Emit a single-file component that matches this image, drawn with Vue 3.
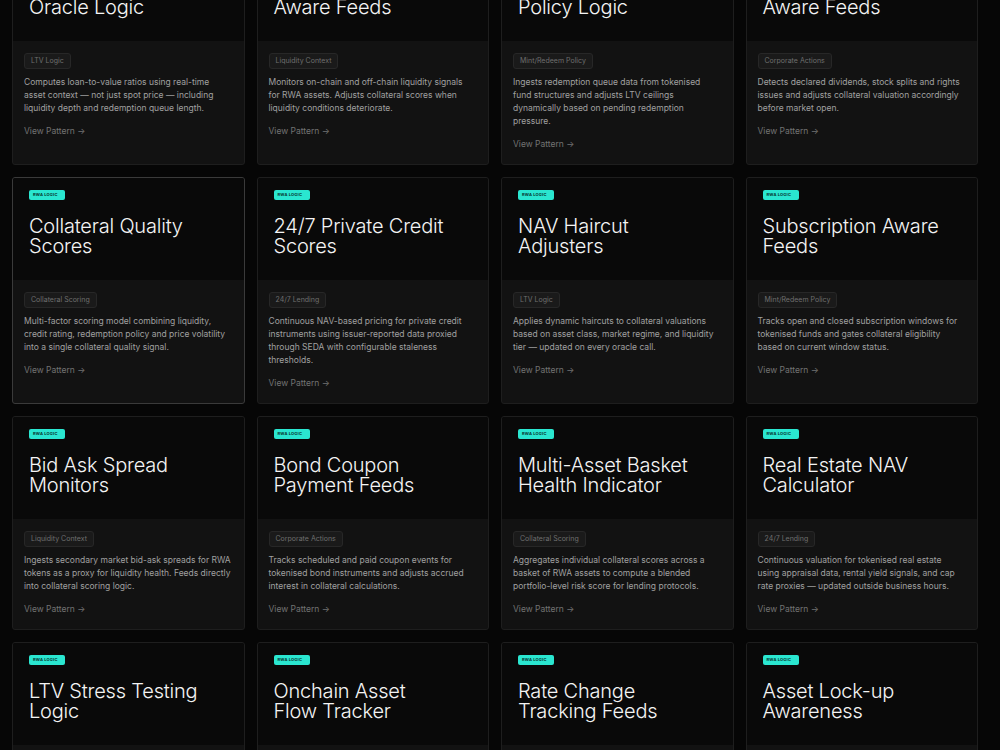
<script setup>
const patterns = [
  { title: 'Loan-to-Value\nOracle Logic', tag: 'LTV Logic', text: 'Computes loan-to-value ratios using real-time asset context — not just spot price — including liquidity depth and redemption queue length.' },
  { title: 'Liquidity\nAware Feeds', tag: 'Liquidity Context', text: 'Monitors on-chain and off-chain liquidity signals for RWA assets. Adjusts collateral scores when liquidity conditions deteriorate.' },
  { title: 'Redemption\nPolicy Logic', tag: 'Mint/Redeem Policy', text: 'Ingests redemption queue data from tokenised fund structures and adjusts LTV ceilings dynamically based on pending redemption pressure.' },
  { title: 'Corporate Action\nAware Feeds', tag: 'Corporate Actions', text: 'Detects declared dividends, stock splits and rights issues and adjusts collateral valuation accordingly before market open.' },
  { title: 'Collateral Quality\nScores', tag: 'Collateral Scoring', text: 'Multi-factor scoring model combining liquidity, credit rating, redemption policy and price volatility into a single collateral quality signal.', active: true },
  { title: '24/7 Private Credit\nScores', tag: '24/7 Lending', text: 'Continuous NAV-based pricing for private credit instruments using issuer-reported data proxied through SEDA with configurable staleness thresholds.' },
  { title: 'NAV Haircut\nAdjusters', tag: 'LTV Logic', text: 'Applies dynamic haircuts to collateral valuations based on asset class, market regime, and liquidity tier — updated on every oracle call.' },
  { title: 'Subscription Aware\nFeeds', tag: 'Mint/Redeem Policy', text: 'Tracks open and closed subscription windows for tokenised funds and gates collateral eligibility based on current window status.' },
  { title: 'Bid Ask Spread\nMonitors', tag: 'Liquidity Context', text: 'Ingests secondary market bid-ask spreads for RWA tokens as a proxy for liquidity health. Feeds directly into collateral scoring logic.' },
  { title: 'Bond Coupon\nPayment Feeds', tag: 'Corporate Actions', text: 'Tracks scheduled and paid coupon events for tokenised bond instruments and adjusts accrued interest in collateral calculations.' },
  { title: 'Multi-Asset Basket\nHealth Indicator', tag: 'Collateral Scoring', text: 'Aggregates individual collateral scores across a basket of RWA assets to compute a blended portfolio-level risk score for lending protocols.' },
  { title: 'Real Estate NAV\nCalculator', tag: '24/7 Lending', text: 'Continuous valuation for tokenised real estate using appraisal data, rental yield signals, and cap rate proxies — updated outside business hours.' },
  { title: 'LTV Stress Testing\nLogic' },
  { title: 'Onchain Asset\nFlow Tracker' },
  { title: 'Rate Change\nTracking Feeds' },
  { title: 'Asset Lock-up\nAwareness' },
]
</script>

<template>
  <div class="page">
    <div class="grid">
      <article
        v-for="p in patterns"
        :key="p.title"
        class="card"
        :class="{ active: p.active }"
      >
        <header class="card-head">
          <span class="badge">RWA LOGIC</span>
          <h3 class="title">{{ p.title }}</h3>
        </header>
        <div class="card-body">
          <template v-if="p.tag">
            <span class="tag">{{ p.tag }}</span>
            <p class="desc">{{ p.text }}</p>
            <a class="link">View Pattern →</a>
          </template>
        </div>
      </article>
    </div>
  </div>
</template>

<style>
html, body { background: #060606; overflow: hidden; }
</style>

<style scoped>
.page {
  height: 750px;
  overflow: hidden;
  background: #060606;
  font-family: Inter, "Liberation Sans", sans-serif;
}
.grid {
  display: grid;
  grid-template-columns: repeat(4, 1fr);
  gap: 12px;
  margin: -62.5px 22px 0 12px;
}
.card {
  display: flex;
  flex-direction: column;
  border: 1px solid #1e1e1e;
  border-radius: 3px;
  overflow: hidden;
  background: #121212;
}
.card.active { border-color: #3a3a3a; }
.card-head {
  height: 102px;
  box-sizing: border-box;
  padding: 12px 16px 0;
  background: #090909;
  flex: none;
}
.badge {
  display: block;
  width: 36px;
  height: 10px;
  box-sizing: border-box;
  padding-left: 4px;
  border-radius: 2px;
  background: #2ae6d0;
  color: #06312c;
  font-size: 4px;
  font-weight: 700;
  line-height: 10px;
  letter-spacing: 0.2px;
  white-space: nowrap;
}
.title {
  margin: 16px 0 0;
  color: #f4f4f4;
  font-size: 20px;
  font-weight: 300;
  line-height: 20px;
  letter-spacing: -0.2px;
  white-space: pre-line;
}
.card-body {
  flex: 1;
  padding: 12px 12px 13px 11px;
  min-height: 8px;
}
.tag {
  display: block;
  width: fit-content;
  height: 16px;
  box-sizing: border-box;
  padding: 0 6px;
  border: 1px solid #272727;
  border-radius: 3px;
  background: #1a1a1a;
  color: #6f6f6f;
  font-size: 7px;
  line-height: 14px;
}
.desc {
  margin: 7px 0 0;
  color: #a0a0a0;
  font-size: 8.5px;
  line-height: 13px;
}
.link {
  display: block;
  margin-top: 10px;
  color: #727272;
  font-size: 8.5px;
  line-height: 13px;
}
</style>
